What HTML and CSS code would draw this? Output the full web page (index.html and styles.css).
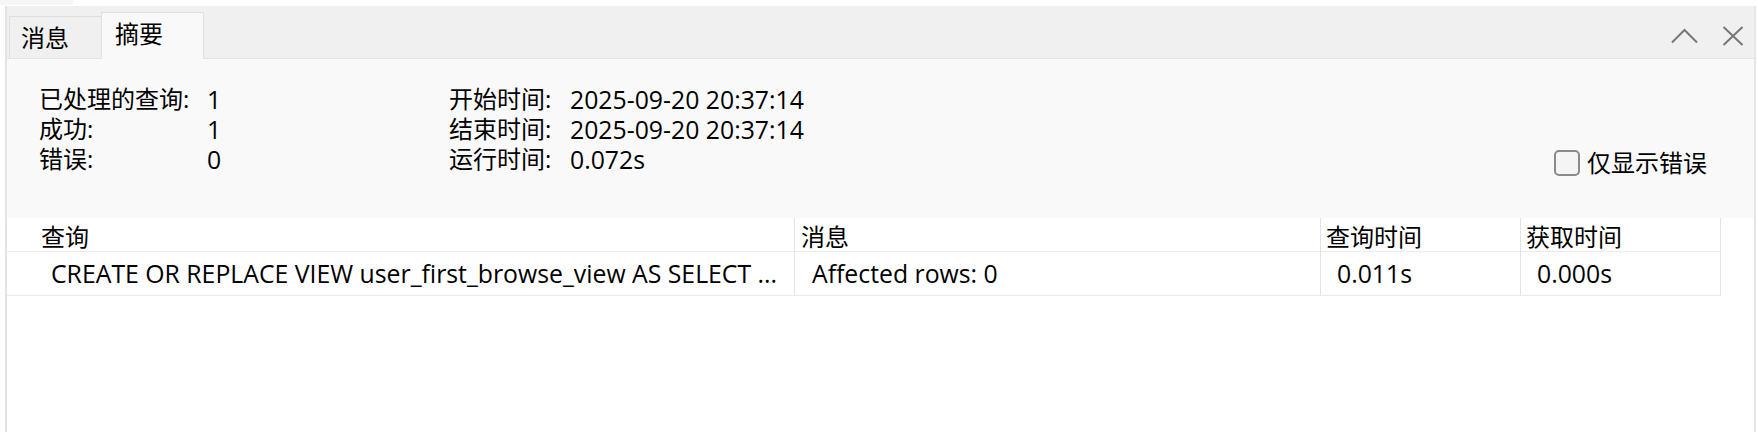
FILE: index.html
```html
<!DOCTYPE html>
<html lang="zh-CN">
<head>
<meta charset="utf-8">
<title>摘要</title>
<link rel="stylesheet" href="styles.css">
</head>
<body>
<div class="top"><div class="stub"></div></div>
<div class="frame">
  <div class="tabbar">
    <div class="tab">消息</div>
    <div class="tab active">摘要</div>
    <div class="tools">
      <svg class="ico-up" width="28" height="16" viewBox="0 0 28 16"><polyline points="1,14.5 13.5,2 26,14.5" fill="none" stroke="#777" stroke-width="2"/></svg>
      <svg class="ico-x" width="22" height="20" viewBox="0 0 22 20"><path d="M1.5 1 L20.5 19 M20.5 1 L1.5 19" fill="none" stroke="#777" stroke-width="2"/></svg>
    </div>
  </div>
  <div class="summary">
    <div class="stats">
      <span class="k">已处理的查询:</span><span class="v">1</span>
      <span class="k">开始时间:</span><span class="v">2025-09-20 20:37:14</span>
      <span class="k">成功:</span><span class="v">1</span>
      <span class="k">结束时间:</span><span class="v">2025-09-20 20:37:14</span>
      <span class="k">错误:</span><span class="v">0</span>
      <span class="k">运行时间:</span><span class="v">0.072s</span>
    </div>
    <label class="filter"><span class="box"></span><span class="ftext">仅显示错误</span></label>
  </div>
  <div class="table">
    <div class="th c1">查询</div>
    <div class="th c2">消息</div>
    <div class="th c3">查询时间</div>
    <div class="th c4">获取时间</div>
    <div class="td c1">CREATE OR REPLACE VIEW user_first_browse_view AS SELECT ...</div>
    <div class="td c2">Affected rows: 0</div>
    <div class="td c3">0.011s</div>
    <div class="td c4">0.000s</div>
  </div>
</div>
</body>
</html>
```
FILE: styles.css
```css
* { box-sizing: border-box; }
html, body { margin: 0; padding: 0; background: #ffffff; }
body {
  font-family: "Open Sans", "Noto Sans CJK SC", sans-serif;
  font-size: 24px;
  line-height: 30px;
  color: #000;
  width: 1758px;
  height: 432px;
  overflow: hidden;
}
.top { height: 6px; }
.stub { width: 73px; height: 5px; background: #f6f6f6; }
.frame {
  margin-left: 5px;
  width: 1751px;
  height: 426px;
  border-left: 2px solid #e4e4e4;
  border-right: 2px solid #e6e6e6;
}
.tabbar {
  display: flex;
  align-items: flex-end;
  height: 53px;
  padding-left: 2px;
  background: #f0f0f0;
  border-bottom: 1px solid #e4e4e4;
}
.tab {
  height: 42px;
  width: 92px;
  padding: 6px 0 0 11px;
  border-left: 1px solid #dddddd;
  border-top: 1px solid #dddddd;
  white-space: nowrap;
}
.tab.active {
  height: 47px;
  width: 103px;
  margin-bottom: -1px;
  padding-left: 13px;
  background: #f9f9f9;
  border: 1px solid #e0e0e0;
  border-bottom: none;
}
.tools {
  margin-left: auto;
  align-self: flex-start;
  display: flex;
  align-items: flex-start;
  padding-top: 22px;
  margin-right: 10px;
}
.ico-up { display: block; }
.ico-x { display: block; margin-left: 23px; margin-top: -2px; }
.summary {
  display: flex;
  height: 159px;
  padding: 25px 0 0 32px;
  background: #f9f9f9;
}
.stats {
  display: grid;
  grid-template-columns: 168px 242px 121px auto;
  grid-auto-rows: 30px;
  align-content: start;
}
.k, .v { white-space: nowrap; }
.v, .td { font-size: 24.8px; }
.filter {
  margin-left: auto;
  margin-top: 64px;
  margin-right: 47px;
  align-self: flex-start;
  display: flex;
  align-items: center;
  height: 30px;
}
.box {
  width: 26px;
  height: 26px;
  border: 2px solid #8a8a8a;
  border-radius: 5px;
  background: #f4f4f4;
  margin-right: 7px;
}
.table {
  display: grid;
  grid-template-columns: 788px 526px 200px 200px;
  width: 1714px;
  background: #fff;
}
.th, .td {
  border-right: 1px solid #e3e3e3;
  border-bottom: 1px solid #ebebeb;
  white-space: nowrap;
  overflow: hidden;
}
.th { height: 34px; padding-top: 4px; }
.td { height: 44px; padding-top: 6px; }
.th.c1 { padding-left: 34px; }
.th.c2 { padding-left: 6px; }
.th.c3, .th.c4 { padding-left: 5px; }
.td.c1 { padding-left: 44px; }
.td.c2 { padding-left: 17px; }
.td.c3, .td.c4 { padding-left: 16px; }
```
